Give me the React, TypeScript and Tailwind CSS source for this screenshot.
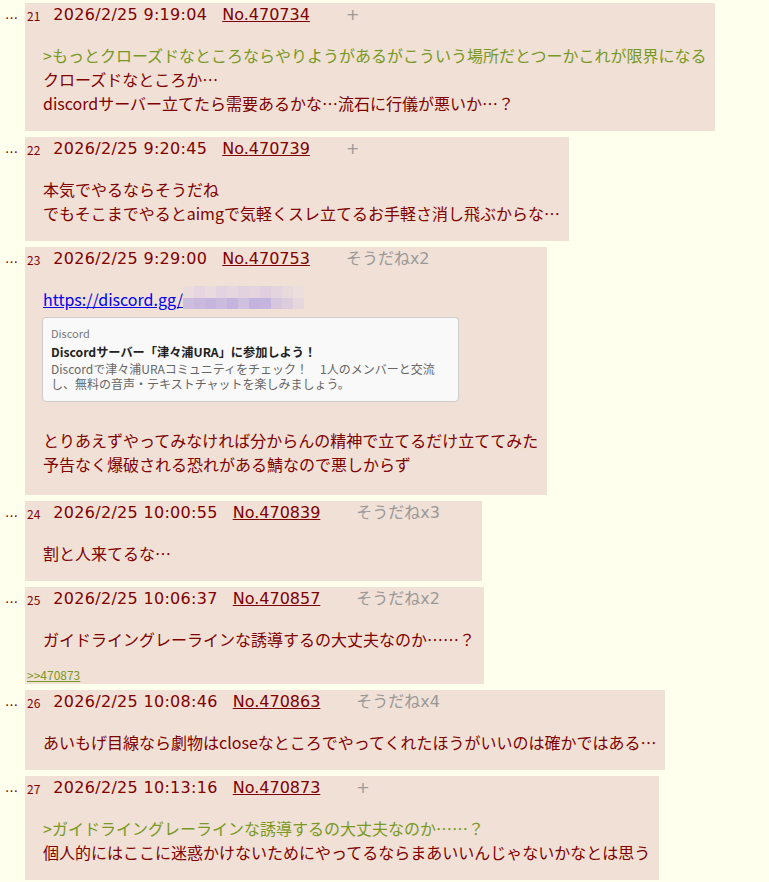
import React from "react";

type Post = {
  n: number;
  date: string;
  no: string;
  sodane?: string;
  lines: { t: string; q?: boolean }[];
  kind?: "discord";
  ref?: string;
};

const posts: Post[] = [
  {
    n: 21,
    date: "2026/2/25 9:19:04",
    no: "470734",
    lines: [
      { t: ">もっとクローズドなところならやりようがあるがこういう場所だとつーかこれが限界になる", q: true },
      { t: "クローズドなところか…" },
      { t: "discordサーバー立てたら需要あるかな…流石に行儀が悪いか…？" },
    ],
  },
  {
    n: 22,
    date: "2026/2/25 9:20:45",
    no: "470739",
    lines: [
      { t: "本気でやるならそうだね" },
      { t: "でもそこまでやるとaimgで気軽くスレ立てるお手軽さ消し飛ぶからな…" },
    ],
  },
  {
    n: 23,
    date: "2026/2/25 9:29:00",
    no: "470753",
    sodane: "そうだねx2",
    kind: "discord",
    lines: [
      { t: "とりあえずやってみなければ分からんの精神で立てるだけ立ててみた" },
      { t: "予告なく爆破される恐れがある鯖なので悪しからず" },
    ],
  },
  {
    n: 24,
    date: "2026/2/25 10:00:55",
    no: "470839",
    sodane: "そうだねx3",
    lines: [{ t: "割と人来てるな…" }],
  },
  {
    n: 25,
    date: "2026/2/25 10:06:37",
    no: "470857",
    sodane: "そうだねx2",
    lines: [{ t: "ガイドライングレーラインな誘導するの大丈夫なのか……？" }],
    ref: ">>470873",
  },
  {
    n: 26,
    date: "2026/2/25 10:08:46",
    no: "470863",
    sodane: "そうだねx4",
    lines: [{ t: "あいもげ目線なら劇物はcloseなところでやってくれたほうがいいのは確かではある…" }],
  },
  {
    n: 27,
    date: "2026/2/25 10:13:16",
    no: "470873",
    lines: [
      { t: ">ガイドライングレーラインな誘導するの大丈夫なのか……？", q: true },
      { t: "個人的にはここに迷惑かけないためにやってるならまあいいんじゃないかなとは思う" },
    ],
  },
];

const mosaicTop = [
  "#eadbdc", "#e6d5de", "#e9dadd", "#e3d2df", "#e6d6de", "#e2d1df", "#e5d4de", "#e0cfdf", "#e4d4de", "#e8d9dd", "#ecdedc",
];
const mosaicBot = [
  "#cdbddf", "#c9b9de", "#c6b5de", "#cbbbdf", "#c4b3dd", "#cfc0df", "#c3b2dd", "#c5b4dd", "#d6c7de", "#dccddd", "#e6d7dc",
];

function Mosaic() {
  return (
    <span className="flex flex-col mt-[-4px]">
      <span className="flex">
        {mosaicTop.map((c, i) => (
          <span key={i} className="block w-[11px] h-[12px]" style={{ background: c }} />
        ))}
      </span>
      <span className="flex">
        {mosaicBot.map((c, i) => (
          <span key={i} className="block w-[11px] h-[11px]" style={{ background: c }} />
        ))}
      </span>
    </span>
  );
}

function DiscordBlock() {
  return (
    <div>
      <div className="h-[24px] leading-[24px] flex items-center">
        <span className="text-[#0000ee] underline">https://discord.gg/</span>
        <Mosaic />
      </div>
      <div className="mt-[6px] mb-[26px] ml-[-1px] w-[417px] rounded-[4px] border border-[#cccccc] bg-[#f9f9f9] pt-[8px] px-[8px] pb-[10px]">
        <div className="text-[11px] leading-[14px] text-[#777777]">Discord</div>
        <div className="mt-[4px] text-[12.2px] leading-[16px] font-bold text-[#222222]">
          Discordサーバー「津々浦URA」に参加しよう！
        </div>
        <div className="mt-[1px] text-[12px] leading-[15px] text-[#666666]">
          <div>Discordで津々浦URAコミュニティをチェック！　1人のメンバーと交流</div>
          <div>し、無料の音声・テキストチャットを楽しみましょう。</div>
        </div>
      </div>
    </div>
  );
}

const headerFont = { fontFamily: '"DejaVu Sans", "Noto Sans CJK JP", sans-serif' };

function PostRow({ p }: { p: Post }) {
  return (
    <div className="flex items-start mb-[6px]">
      <div className="w-[25px] shrink-0 pl-[5px] pt-[3px] h-[24px] leading-[24px] text-[13px] text-[#800000]">…</div>
      <div className="bg-[#f0e0d6] pl-[2px] w-fit">
        <div className="flex items-center h-[24px] pr-[42px] whitespace-nowrap overflow-hidden">
          <span className="text-[12px] leading-[24px] text-[#800000] pt-[1px]">{p.n}</span>
          <span
            className="ml-[13px] text-[16px] leading-[24px] text-[#800000] tracking-[0.3px]"
            style={headerFont}
          >
            {p.date}
          </span>
          <span className="ml-[15px] text-[16px] leading-[24px] text-[#800000] underline" style={headerFont}>
            No.{p.no}
          </span>
          <span className="ml-[36px] text-[16px] leading-[24px] text-[#999999]" style={headerFont}>
            {p.sodane ? p.sodane : "+"}
          </span>
        </div>
        <div
          className={
            "mt-[16px] ml-[16px] pr-[9px] text-[16px] leading-[24px] whitespace-nowrap " +
            (p.kind === "discord" ? "mb-[19px]" : "mb-[16px]")
          }
        >
          {p.kind === "discord" && <DiscordBlock />}
          {p.lines.map((l, i) => (
            <div key={i} className={l.q ? "text-[#789922]" : "text-[#800000]"}>
              {l.t}
            </div>
          ))}
        </div>
        {p.ref && (
          <div className="text-[12px] leading-[16px] pb-[1px]">
            <span className="text-[#789922] underline">{p.ref}</span>
          </div>
        )}
      </div>
    </div>
  );
}

export default function App() {
  return (
    <div
      className="min-h-[882px] bg-[#ffffee] pt-[3px] overflow-hidden"
      style={{ fontFamily: '"Noto Sans CJK JP", "Noto Sans", sans-serif' }}
    >
      {posts.map((p) => (
        <PostRow key={p.n} p={p} />
      ))}
    </div>
  );
}
